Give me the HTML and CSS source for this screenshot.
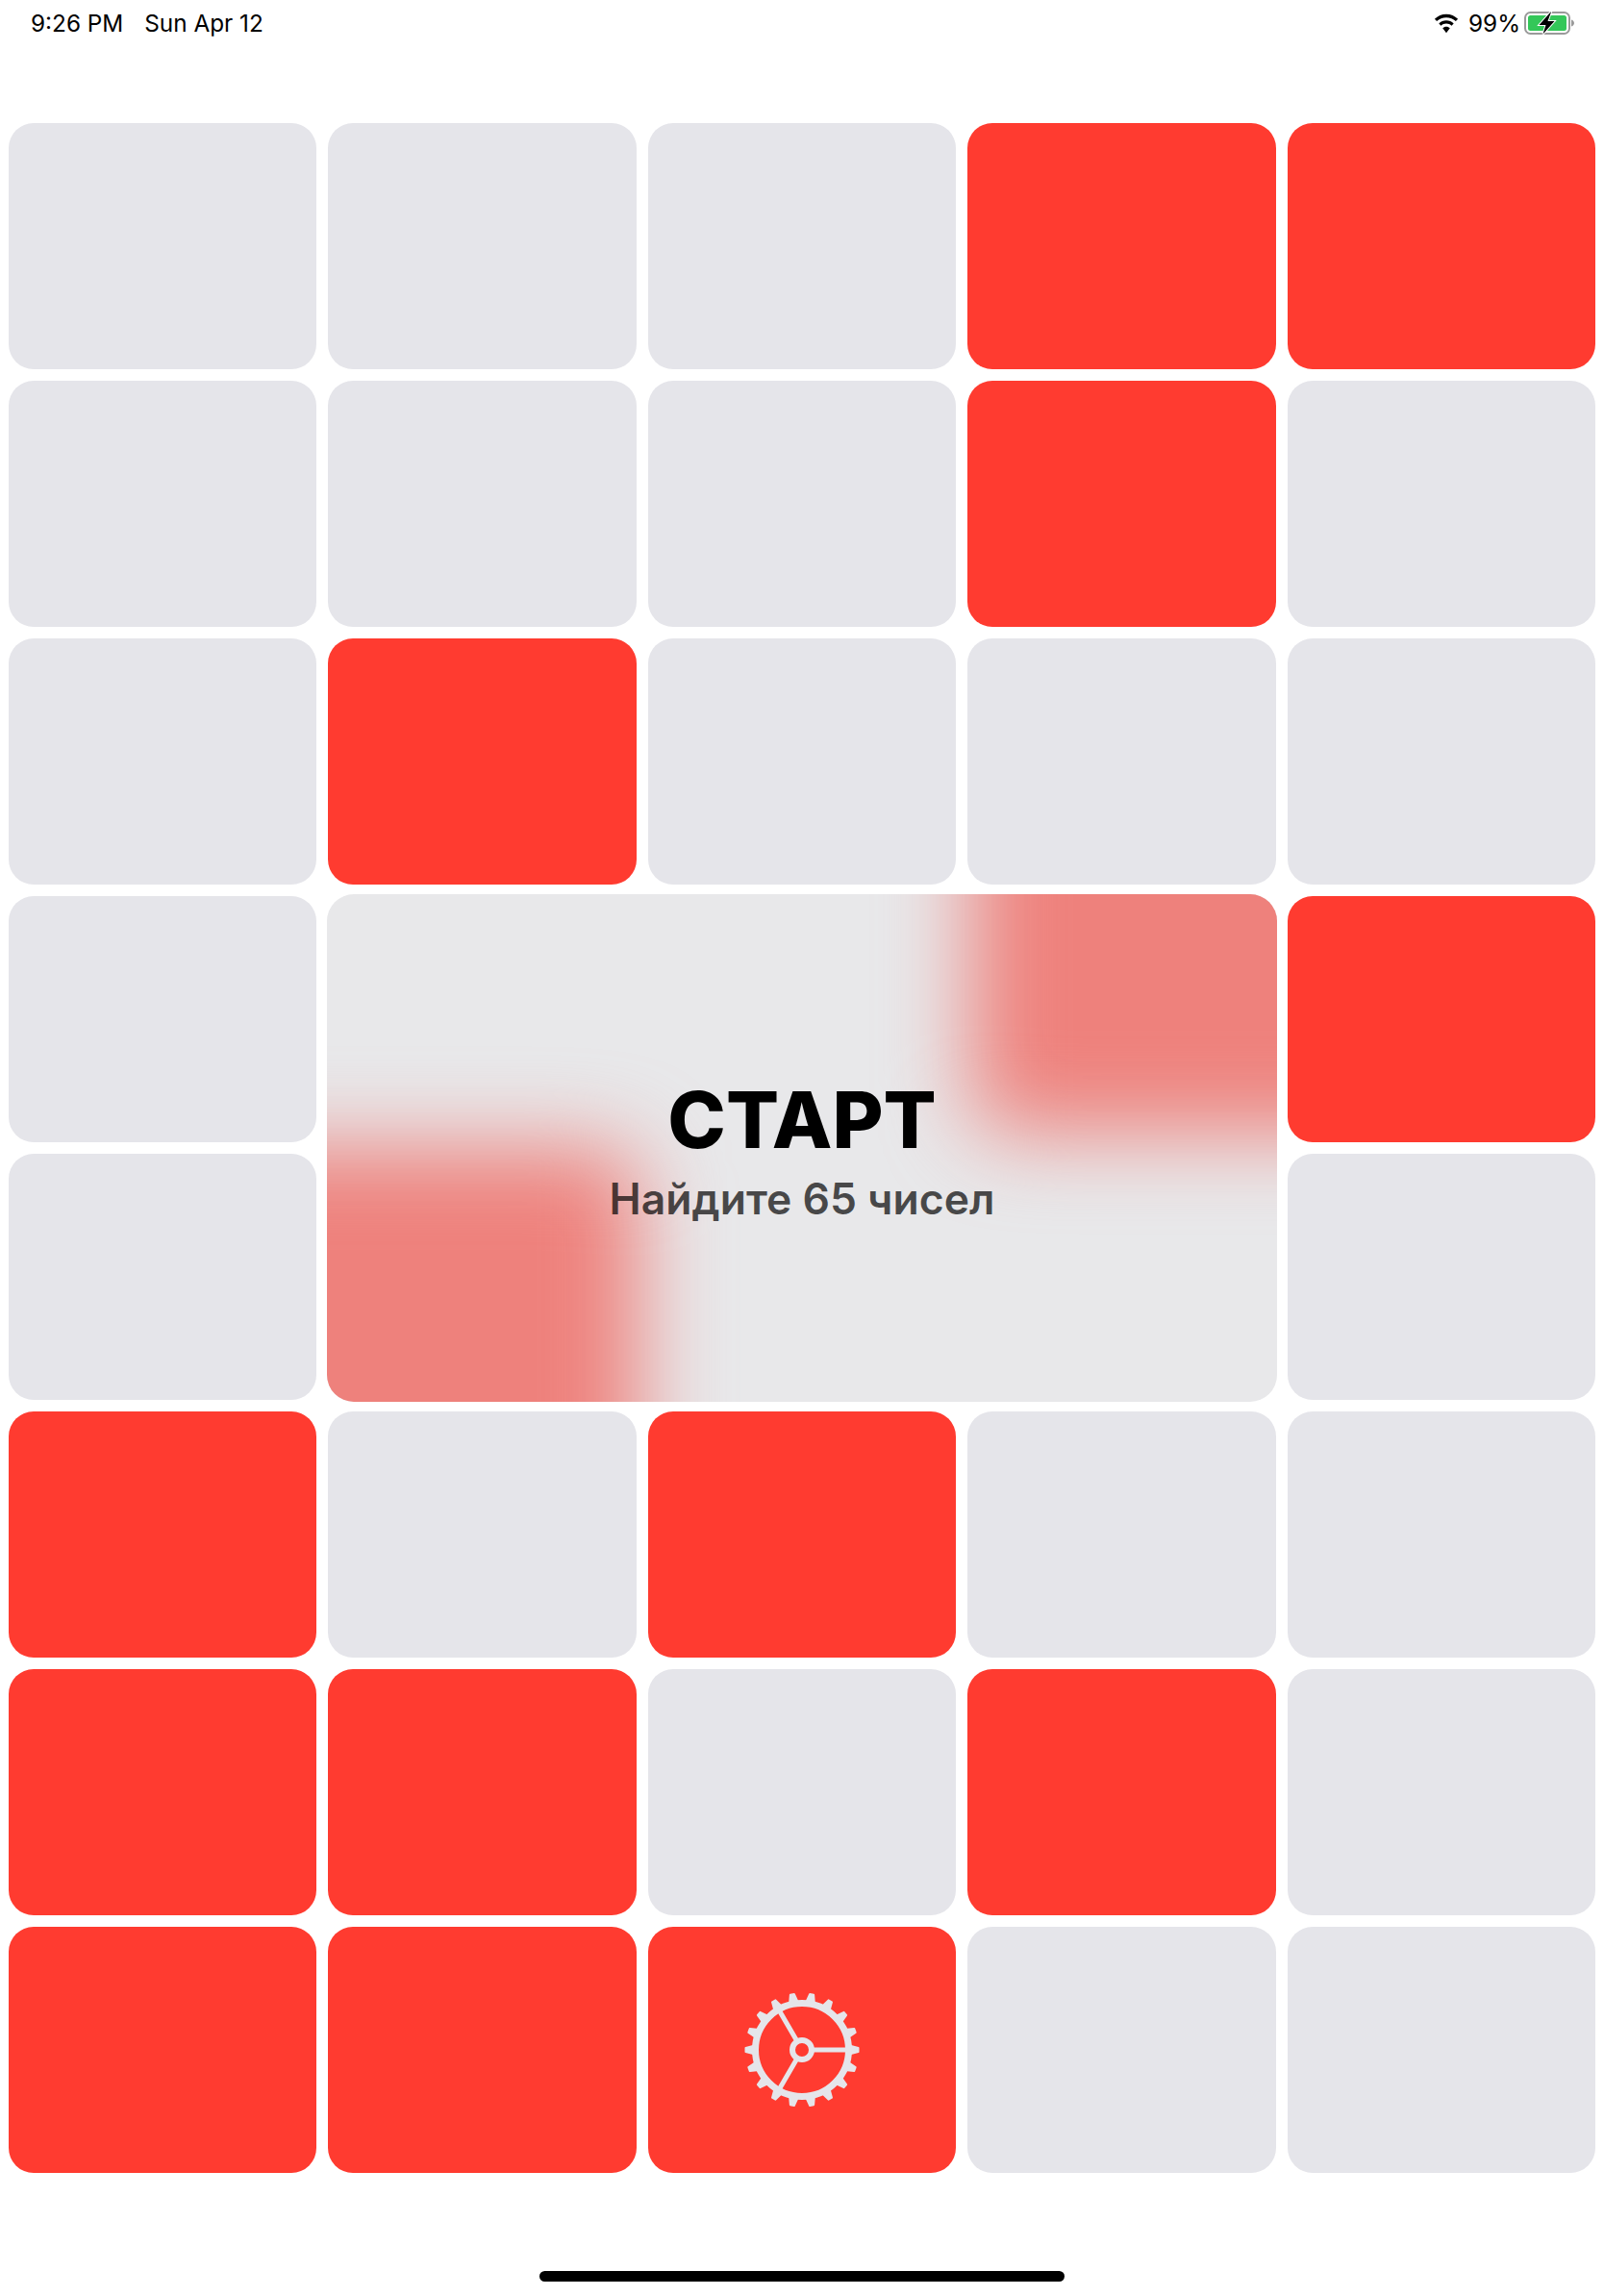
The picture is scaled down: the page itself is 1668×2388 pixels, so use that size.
FILE: index.html
```html
<!DOCTYPE html>
<html lang="ru">
<head>
  <meta charset="UTF-8" />
  <title>Старт</title>
  <link rel="stylesheet" href="styles.css">
</head>
<body>
  <div class="page">
    <div class="status-bar">
      <div class="status-left">
        <span>9:26 PM</span>
        <span>Sun Apr 12</span>
      </div>
      <div class="status-right">
        <svg class="wifi" viewBox="0 0 28 21" width="28" height="21">
          <path d="M14 4.200c3.800 0 7.300 1.500 9.900 3.900l2.200-2.300C22.900 2.700 18.700.8 14 .8S5.100 2.700 1.900 5.800l2.200 2.300C6.700 5.700 10.200 4.200 14 4.200z"/>
          <path d="M14 10.600c2.100 0 4 .8 5.500 2.100l2.200-2.300C19.600 8.500 16.900 7.300 14 7.300s-5.600 1.200-7.700 3.100l2.200 2.300c1.500-1.300 3.400-2.100 5.500-2.100z"/>
          <path d="M14 13.800c-1.500 0-2.800.6-3.800 1.500L14 20.200l3.800-4.900c-1-.9-2.300-1.500-3.800-1.500z"/>
        </svg>
        <span class="battery-pct">99%</span>
        <svg class="battery" viewBox="0 0 53 24" width="53" height="24">
          <rect x="1" y="1" width="46" height="22" rx="5.500" class="battery-case"/>
          <rect x="4" y="4" width="40" height="16" rx="2.500" class="battery-fill"/>
          <path d="M49 8.500c2 .6 3 2 3 3.500s-1 2.900-3 3.500z" class="battery-nub"/>
          <path d="M27.500 .5 15.500 14h7l-3 9.500L31.500 10h-7l3.500-9.500z" class="battery-bolt"/>
        </svg>
      </div>
    </div>

    <div class="board">
      <div class="cell"></div>
      <div class="cell"></div>
      <div class="cell"></div>
      <div class="cell red"></div>
      <div class="cell red"></div>

      <div class="cell"></div>
      <div class="cell"></div>
      <div class="cell"></div>
      <div class="cell red"></div>
      <div class="cell"></div>

      <div class="cell"></div>
      <div class="cell red"></div>
      <div class="cell"></div>
      <div class="cell"></div>
      <div class="cell"></div>

      <div class="cell"></div>
      <div class="cell"></div>
      <div class="cell"></div>
      <div class="cell red"></div>
      <div class="cell red"></div>

      <div class="cell"></div>
      <div class="cell red"></div>
      <div class="cell"></div>
      <div class="cell"></div>
      <div class="cell"></div>

      <div class="cell red"></div>
      <div class="cell"></div>
      <div class="cell red"></div>
      <div class="cell"></div>
      <div class="cell"></div>

      <div class="cell red"></div>
      <div class="cell red"></div>
      <div class="cell"></div>
      <div class="cell red"></div>
      <div class="cell"></div>

      <div class="cell red"></div>
      <div class="cell red"></div>
      <div class="cell red gear-cell">
        <svg class="gear" viewBox="-62 -62 124 124" width="124" height="124">
          <defs>
            <path id="tooth" d="M49 -4.500 L58.500 -2 L58.500 2 L49 4.500z"/>
          </defs>
          <g class="gear-teeth">
            <use href="#tooth"/>
            <use href="#tooth" transform="rotate(20)"/>
            <use href="#tooth" transform="rotate(40)"/>
            <use href="#tooth" transform="rotate(60)"/>
            <use href="#tooth" transform="rotate(80)"/>
            <use href="#tooth" transform="rotate(100)"/>
            <use href="#tooth" transform="rotate(120)"/>
            <use href="#tooth" transform="rotate(140)"/>
            <use href="#tooth" transform="rotate(160)"/>
            <use href="#tooth" transform="rotate(180)"/>
            <use href="#tooth" transform="rotate(200)"/>
            <use href="#tooth" transform="rotate(220)"/>
            <use href="#tooth" transform="rotate(240)"/>
            <use href="#tooth" transform="rotate(260)"/>
            <use href="#tooth" transform="rotate(280)"/>
            <use href="#tooth" transform="rotate(300)"/>
            <use href="#tooth" transform="rotate(320)"/>
            <use href="#tooth" transform="rotate(340)"/>
          </g>
          <g class="gear-lines">
            <circle r="48.500" class="gear-rim"/>
            <circle r="10" class="gear-hub"/>
            <path d="M12 0H47M-6 -10.400L-24 -41.600M-6 10.400L-24 41.600" class="gear-spokes"/>
          </g>
        </svg>
      </div>
      <div class="cell"></div>
      <div class="cell"></div>

      <!-- start card, sits over the middle of the board -->
      <div class="start-card">
        <div class="smear smear-top"></div>
        <div class="smear smear-bottom"></div>
        <div class="start-title">СТАРТ</div>
        <div class="start-sub">Найдите 65 чисел</div>
      </div>
    </div>

    <div class="home-bar"></div>
  </div>
</body>
</html>
```

FILE: styles.css
```css
* {
  box-sizing: border-box;
}
body {
  margin: 0;
  background: #fff;
  font-family: Inter, "Noto Sans", sans-serif;
  color: #000;
}
.page {
  height: 2388px;
  display: flex;
  flex-direction: column;
  overflow: hidden;
}
.status-bar {
  height: 128px;
  flex-shrink: 0;
  padding: 10px 30px 0 32px;
  display: flex;
  justify-content: space-between;
  align-items: flex-start;
  font-size: 24.300px;
  line-height: 28px;
}
.status-left {
  display: flex;
  gap: 22px;
}
.status-right {
  display: flex;
  align-items: center;
  height: 28px;
}
.wifi {
  fill: #000;
  margin-right: 9px;
}
.battery-pct {
  margin-right: 4px;
}
.battery-case {
  fill: none;
  stroke: #9a9a9a;
  stroke-width: 2;
}
.battery-fill {
  fill: #34c759;
}
.battery-nub {
  fill: #9a9a9a;
}
.battery-bolt {
  fill: #000;
  stroke: #fff;
  stroke-width: 2;
  paint-order: stroke;
}
.board {
  position: relative;
  display: grid;
  grid-template-columns: repeat(5, 1fr);
  grid-auto-rows: 256px;
  gap: 12px;
  padding: 0 9px;
}
.cell {
  background: #e5e5ea;
  border-radius: 26px;
}
.cell.red {
  background: #ff3b30;
}
.gear-cell {
  display: flex;
  align-items: center;
  justify-content: center;
}
.gear {
  overflow: visible;
}
.gear-teeth {
  fill: #e5e5ea;
  stroke: #e5e5ea;
  stroke-width: 2;
  stroke-linejoin: round;
}
.gear-lines {
  fill: none;
  stroke: #e5e5ea;
}
.gear-rim {
  stroke-width: 7;
}
.gear-hub {
  stroke-width: 6;
}
.gear-spokes {
  stroke-width: 5;
}
.start-card {
  position: absolute;
  grid-area: 4 / 2 / 6 / 5;
  top: -2px;
  bottom: -2px;
  left: -1px;
  right: -1px;
  border-radius: 28px;
  overflow: hidden;
  background: #e8e8ea;
  display: flex;
  flex-direction: column;
  align-items: center;
  padding-top: 194px;
}
/* the red cells under the card, smeared */
.smear {
  position: absolute;
  background: #ee817c;
  border-radius: 40px;
  filter: blur(44px);
}
.smear-top {
  left: 670px;
  top: -200px;
  width: 600px;
  height: 448px;
}
.smear-bottom {
  left: -300px;
  top: 264px;
  width: 624px;
  height: 500px;
}
.start-title,
.start-sub {
  position: relative;
}
.start-title {
  font-size: 81.500px;
  font-weight: 800;
  line-height: 82px;
}
.start-sub {
  margin-top: 15px;
  font-size: 44.500px;
  font-weight: 600;
  line-height: 52px;
  color: rgba(0, 0, 0, 0.7);
}
.home-bar {
  width: 546px;
  height: 11px;
  margin: auto auto 15px;
  background: #000;
  border-radius: 6px;
}
```
